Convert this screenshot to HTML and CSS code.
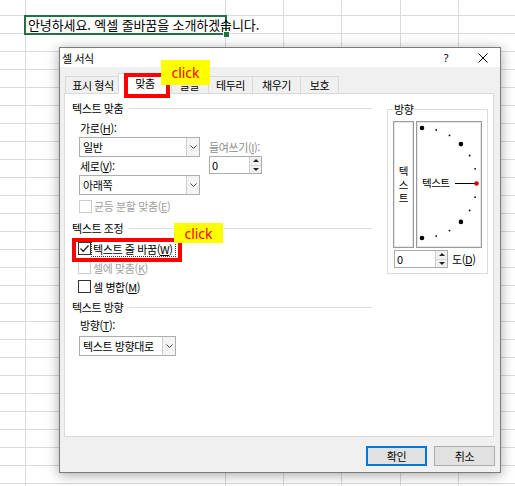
FILE: index.html
```html
<!DOCTYPE html>
<html lang="ko">
<head>
<meta charset="utf-8">
<link rel="stylesheet" href="styles.css">
</head>
<body>
<div class="sheet">
  <div class="cell"><span class="cell-text">안녕하세요. 엑셀 줄바꿈을 소개하겠습니다.</span><i class="handle"></i></div>
</div>

<div class="dialog">
  <div class="titlebar">
    <span class="title">셀 서식</span>
    <span class="help">?</span>
    <span class="close"><svg width="10" height="10" viewBox="0 0 10 10"><path d="M0.5 0.5L9.5 9.5M9.5 0.5L0.5 9.5" stroke="#000" stroke-width="1"/></svg></span>
  </div>

  <div class="tabs">
    <div class="tab t1">표시 형식</div>
    <div class="tab t2 active">맞춤</div>
    <div class="tab t3">글꼴</div>
    <div class="tab t4">테두리</div>
    <div class="tab t5">채우기</div>
    <div class="tab t6">보호</div>
  </div>

  <div class="panel">
    <div class="left">
      <div class="sec first"><span>텍스트 맞춤</span></div>
      <div class="align">
        <div class="col-a">
          <div class="lbl">가로(<u>H</u>):</div>
          <div class="combo w121"><span class="val">일반</span><span class="dd"><svg width="7" height="4" viewBox="0 0 7 4"><path d="M0.5 0.5L3.5 3.5L6.5 0.5" fill="none" stroke="#444"/></svg></span></div>
          <div class="lbl lbl2">세로(<u>V</u>):</div>
          <div class="combo w121"><span class="val">아래쪽</span><span class="dd"><svg width="7" height="4" viewBox="0 0 7 4"><path d="M0.5 0.5L3.5 3.5L6.5 0.5" fill="none" stroke="#444"/></svg></span></div>
        </div>
        <div class="col-b">
          <div class="lbl-dis">들여쓰기(<u>I</u>):</div>
          <div class="spin w53"><span class="val">0</span><span class="arrows"><span class="up"></span><span class="down"></span></span></div>
        </div>
      </div>
      <div class="chk-row dis-row"><span class="box dis"></span><span class="txt dis-txt">균등 분할 맞춤(<u>E</u>)</span></div>

      <div class="sec s2"><span>텍스트 조정</span></div>
      <div class="chk-list">
        <div class="chk"><span class="box on"><svg width="11" height="11" viewBox="0 0 11 11"><path d="M1.5 5.5L4.2 8.2L9.5 2.5" fill="none" stroke="#222" stroke-width="1.3"/></svg></span><span class="txt focus">텍스트 줄 바꿈(<u>W</u>)</span></div>
        <div class="chk"><span class="box dis"></span><span class="txt dis-txt">셀에 맞춤(<u>K</u>)</span></div>
        <div class="chk"><span class="box"></span><span class="txt">셀 병합(<u>M</u>)</span></div>
      </div>

      <div class="sec s3"><span>텍스트 방향</span></div>
      <div class="lbl dir-lbl">방향(<u>T</u>):</div>
      <div class="combo w97 dir-combo"><span class="val">텍스트 방향대로</span><span class="dd"><svg width="7" height="4" viewBox="0 0 7 4"><path d="M0.5 0.5L3.5 3.5L6.5 0.5" fill="none" stroke="#444"/></svg></span></div>
    </div>

    <div class="right">
      <fieldset class="orient">
        <legend>방향</legend>
        <div class="boxes">
          <div class="vbox"><span>텍</span><span>스</span><span>트</span></div>
          <div class="dial">
            <svg width="64" height="125" viewBox="0 0 64 125">
              <g fill="#000">
                <circle cx="5" cy="6" r="2.3"/>
                <circle cx="19.2" cy="7.9" r="0.9"/>
                <circle cx="32.5" cy="13.4" r="0.9"/>
                <circle cx="43.9" cy="22.1" r="2.3"/>
                <circle cx="52.6" cy="33.5" r="0.9"/>
                <circle cx="58.1" cy="46.8" r="0.9"/>
                <circle cx="58.1" cy="75.2" r="0.9"/>
                <circle cx="52.6" cy="88.5" r="0.9"/>
                <circle cx="43.9" cy="99.9" r="2.3"/>
                <circle cx="32.5" cy="108.6" r="0.9"/>
                <circle cx="19.2" cy="114.1" r="0.9"/>
                <circle cx="5" cy="116" r="2.3"/>
              </g>
              <text x="5" y="65" class="dial-text">텍스트</text>
              <path d="M38 61.5H58" stroke="#000" stroke-width="1"/>
              <circle cx="59.5" cy="61.5" r="2.3" fill="#d40000"/>
            </svg>
          </div>
        </div>
        <div class="deg-row">
          <div class="spin w54"><span class="val">0</span><span class="arrows"><span class="up"></span><span class="down"></span></span></div>
          <span class="deg">도(<u>D</u>)</span>
        </div>
      </fieldset>
    </div>
  </div>

  <div class="buttons">
    <div class="btn default">확인</div>
    <div class="btn">취소</div>
  </div>

  <div class="redbox r1"></div>
  <div class="redbox r2"></div>
  <div class="click c1">click</div>
  <div class="click c2">click</div>
</div>
</body>
</html>
```

FILE: styles.css
```css
* { box-sizing: border-box; }
html, body { margin: 0; padding: 0; }
body {
  width: 515px;
  height: 486px;
  overflow: hidden;
  position: relative;
  font-family: "Noto Sans CJK KR", "Noto Sans", sans-serif;
  color: #000;
  background-color: #fff;
  background-image:
    linear-gradient(to right,
      transparent 25px, #dadada 25px, #dadada 26px, transparent 26px,
      transparent 225px, #dadada 225px, #dadada 226px, transparent 226px,
      transparent 283px, #dadada 283px, #dadada 284px, transparent 284px,
      transparent 341px, #dadada 341px, #dadada 342px, transparent 342px,
      transparent 400px, #dadada 400px, #dadada 401px, transparent 401px,
      transparent 458px, #dadada 458px, #dadada 459px, transparent 459px),
    repeating-linear-gradient(to bottom,
      transparent 0, transparent 15px, #dadada 15px, #dadada 16px, transparent 16px, transparent 18px);
}

/* spreadsheet */
.sheet { padding: 15px 0 0 24px; }
.cell {
  position: relative;
  width: 203px;
  height: 20px;
  border: 2px solid #217346;
  white-space: nowrap;
  font-size: 13px;
  line-height: 16px;
  letter-spacing: -0.1px;
  padding-left: 2px;
}
.cell-text { position: relative; }
.handle {
  position: absolute;
  right: -5px;
  bottom: -5px;
  width: 7px;
  height: 7px;
  background: #217346;
  border: 1px solid #fff;
}

/* dialog */
.dialog {
  position: absolute;
  left: 59px;
  top: 47px;
  width: 442px;
  height: 426px;
  border: 1px solid #7a7a7a;
  background: #f0f0f0;
  box-shadow: 0 2px 12px rgba(0, 0, 0, 0.35);
  font-size: 11px;
  letter-spacing: -0.4px;
}
.titlebar {
  height: 19px;
  background: #fff;
  display: flex;
  align-items: center;
}
.title { padding-left: 2px; font-size: 11px; }
.help { margin-left: auto; width: 20px; margin-right: 10px; text-align: center; font-size: 11px; font-family: "Noto Sans", sans-serif; }
.close { width: 34px; display: flex; justify-content: center; align-items: center; }

.tabs {
  display: flex;
  align-items: flex-end;
  height: 20px;
  margin: 6px 0 0 5px;
  position: relative;
  z-index: 1;
}
.tab {
  height: 17px;
  border: 1px solid #d9d9d9;
  border-bottom: none;
  background: #f0f0f0;
  margin-right: -1px;
  display: flex;
  align-items: center;
  justify-content: center;
  line-height: 14px;
  white-space: nowrap;
}
.t1 { width: 56px; }
.t2 { width: 54px; }
.t3 { width: 39px; }
.t4 { width: 45px; }
.t5 { width: 49px; }
.t6 { width: 39px; }
.tab.active {
  height: 21px;
  background: #fff;
  margin: 0 -2px -1px -2px;
  position: relative;
  z-index: 2;
  padding-bottom: 2px;
}

.panel {
  margin-left: 4px;
  width: 430px;
  height: 344px;
  background: #fff;
  border: 1px solid #d9d9d9;
  display: flex;
  align-items: flex-start;
}
.left { width: 300px; margin-left: 7px; }
.sec {
  display: flex;
  align-items: center;
  height: 16px;
  line-height: 16px;
}
.sec::after {
  content: "";
  flex: 1;
  height: 1px;
  background: #dcdcdc;
  margin-left: 6px;
}
.sec.first { margin-top: 6px; }
.sec.s2 { margin-top: 6px; }
.sec.s3 { margin-top: 3px; }

.align { display: flex; margin: 4px 0 0 7px; }
.col-a { width: 121px; }
.lbl { height: 17px; line-height: 17px; padding-left: 1px; }
.lbl2 { height: 18px; line-height: 18px; }
.col-b { margin-left: 9px; padding-top: 19px; width: 53px; }
.lbl-dis { height: 16px; line-height: 16px; color: #8d8d8d; white-space: nowrap; }

.combo {
  height: 20px;
  border: 1px solid #adadad;
  background: #fff;
  display: flex;
  align-items: stretch;
}
.combo .val { flex: 1; padding-left: 3px; line-height: 18px; white-space: nowrap; overflow: hidden; }
.combo .dd {
  width: 13px;
  border-left: 1px solid #cfcfcf;
  background: #f4f4f4;
  display: flex;
  align-items: center;
  justify-content: center;
}
.w121 { width: 121px; }
.w97 { width: 97px; }

.spin {
  height: 18px;
  border: 1px solid #adadad;
  background: #fff;
  display: flex;
}
.spin .val { flex: 1; padding-left: 2px; line-height: 16px; }
.spin .arrows {
  width: 12px;
  border-left: 1px solid #cfcfcf;
  background: #f0f0f0;
  display: flex;
  flex-direction: column;
}
.spin .up, .spin .down {
  flex: 1;
  display: flex;
  align-items: center;
  justify-content: center;
}
.spin .up { border-bottom: 1px solid #d6d6d6; }
.spin .up::before {
  content: "";
  border-left: 3px solid transparent;
  border-right: 3px solid transparent;
  border-bottom: 3px solid #222;
}
.spin .down::before {
  content: "";
  border-left: 3px solid transparent;
  border-right: 3px solid transparent;
  border-top: 3px solid #222;
}
.w53 { width: 53px; margin-top: 1px; }
.w54 { width: 54px; }

.box {
  width: 13px;
  height: 13px;
  border: 1px solid #333;
  background: #fff;
  display: inline-flex;
  align-items: center;
  justify-content: center;
  flex: none;
}
.box.dis { border-color: #cccccc; }
.dis-txt { color: #a0a0a0; }
.chk-row {
  display: flex;
  align-items: center;
  height: 16px;
  margin-top: 3px;
  padding-left: 7px;
}
.chk-row .txt { margin-left: 2px; }
.chk-list { margin-top: 3px; padding-left: 6px; }
.chk { display: flex; align-items: center; height: 19px; }
.chk .txt {
  margin-left: 0;
  padding: 0 2px 0 1px;
  border: 1px dotted transparent;
  line-height: 14px;
}
.chk .txt.focus { border-color: #333; }
.dir-lbl { margin-top: 2px; padding-left: 8px; height: 16px; line-height: 16px; }
.dir-combo { margin: 3px 0 0 7px; }

.right { margin-left: 15px; }
.orient {
  margin: 7px 0 0 0;
  padding: 4px 5px 5px 5px;
  border: 1px solid #dcdcdc;
  width: 101px;
  min-width: 0;
}
.orient legend { padding: 0 1px; line-height: 16px; height: 16px; }
.boxes { display: flex; gap: 2px; height: 127px; }
.vbox {
  width: 21px;
  border: 1px solid #9a9a9a;
  box-shadow: inset 0 0 0 1px #e6e6e6;
  display: flex;
  flex-direction: column;
  align-items: center;
  justify-content: center;
  line-height: 13.5px;
  font-size: 10.5px;
}
.dial {
  width: 66px;
  border: 1px solid #9a9a9a;
  box-shadow: inset 0 0 0 1px #e6e6e6;
}
.dial svg { display: block; }
.dial-text { font-family: "Noto Sans CJK KR", sans-serif; font-size: 10.5px; letter-spacing: -0.5px; }
.deg-row { display: flex; align-items: center; margin-top: 2px; padding-left: 1px; }
.deg { margin-left: 4px; }

.buttons {
  display: flex;
  justify-content: flex-end;
  gap: 7px;
  margin-top: 9px;
  padding-right: 5px;
}
.btn {
  width: 61px;
  height: 20px;
  border: 1px solid #adadad;
  background: #e1e1e1;
  display: flex;
  align-items: center;
  justify-content: center;
}
.btn.default { border: 2px solid #0078d7; }

/* annotations */
.redbox {
  position: absolute;
  border: 4px solid #ff0000;
  z-index: 5;
}
.r1 { left: 64px; top: 25px; width: 46px; height: 25px; }
.r2 { left: 12px; top: 190px; width: 110px; height: 24px; }
.click {
  position: absolute;
  z-index: 6;
  background: #ffff00;
  color: #ff0000;
  font-family: "Noto Sans", sans-serif;
  font-size: 14px;
  letter-spacing: 0;
  display: flex;
  align-items: center;
  justify-content: center;
}
.c1 { left: 101px; top: 12px; width: 49px; height: 25px; }
.c2 { left: 114px; top: 175px; width: 49px; height: 20px; }
```
